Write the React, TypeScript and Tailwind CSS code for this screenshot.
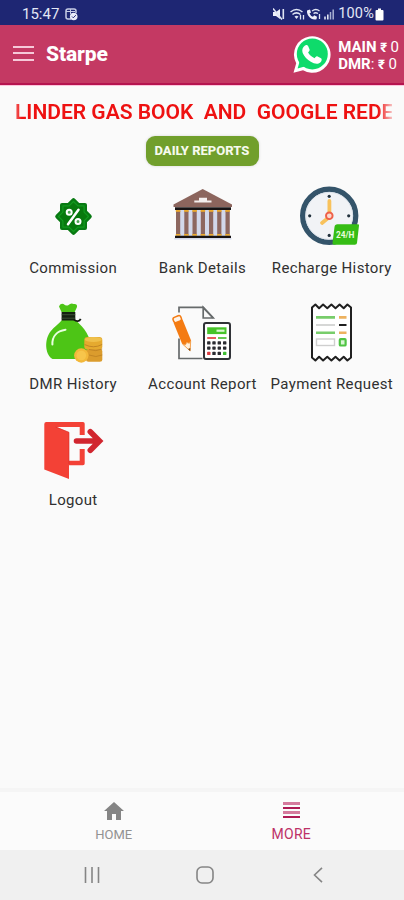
import { FunctionComponent, JSX, ReactNode } from "react";

const CommissionIcon: FunctionComponent = (): JSX.Element => (
  <svg viewBox="0 0 60 60" className="w-[60px] h-[60px]">
    <g fill="#087a12" stroke="#087a12" strokeWidth="4" strokeLinejoin="round">
      <rect x="19" y="19" width="23" height="23" />
      <rect x="19" y="19" width="23" height="23" transform="rotate(45 30.5 30.5)" />
    </g>
    <g fill="#07790d" stroke="#129a1e" strokeWidth="1.2" strokeLinejoin="round">
      <path d="M30.5 15.500l4.400 4.400h6.200v6.200l4.400 4.400-4.400 4.400v6.200h-6.200l-4.400 4.400-4.400-4.400h-6.200v-6.200l-4.400-4.400 4.400-4.400v-6.200h6.200z" />
    </g>
    <path d="M35.500 23.800L25 38.300" stroke="#fff" strokeWidth="2.500" strokeLinecap="round" />
    <g fill="#4ea653" stroke="#fff" strokeWidth="2">
      <circle cx="26.200" cy="26.200" r="2.500" />
      <circle cx="35" cy="35.600" r="2.500" />
    </g>
  </svg>
);

const BankIcon: FunctionComponent = (): JSX.Element => (
  <svg viewBox="0 0 60 60" className="w-[60px] h-[60px]">
    <path d="M30.7 3L60 18.5V21H1.5v-2.5z" fill="#8c655d" />
    <path d="M27 11.8h8v2.8h4.5v2H22.3v-2H27z" fill="#f4efee" />
    <path d="M3 21.2h56v2.9H3z" fill="#171314" />
    <path d="M4 24h54v26H4z" fill="#d2d8ea" />
    {[4, 12.3, 20.5, 28.8, 37, 45.2, 53.5].map((x) => (
      <g key={x}>
        <rect x={x} y="25" width="4.2" height="24" fill="#8d675f" />
        <rect x={x - 0.2} y="24" width="4.6" height="1.8" fill="#edaa2c" />
        <rect x={x - 0.2} y="48" width="4.6" height="1.8" fill="#edaa2c" />
      </g>
    ))}
    <path d="M3 49.7h56V52H3z" fill="#171314" />
    <path d="M2.3 52h57v1.6h-57z" fill="#d2d8ea" />
  </svg>
);

const ClockIcon: FunctionComponent = (): JSX.Element => (
  <svg viewBox="0 0 60 60" className="w-[60px] h-[60px] overflow-visible">
    <circle cx="28.2" cy="29.8" r="26.5" fill="#f1f3f6" stroke="#34546a" strokeWidth="5.400" />
    <circle cx="28.2" cy="29.8" r="23.500" fill="none" stroke="#dce3eb" strokeWidth="1" />
    <g fill="#22313d">
      <circle cx="28.2" cy="10.3" r="1.6" />
      <circle cx="8.7" cy="29.8" r="1.6" />
      <circle cx="47.7" cy="29.8" r="1.6" />
      <circle cx="28.2" cy="49.4" r="1.6" />
    </g>
    <path d="M28.4 15v13" stroke="#f8c25c" strokeWidth="3.8" strokeLinecap="round" />
    <path d="M26.5 32.5l-5.5 4.4" stroke="#f8c25c" strokeWidth="3.8" strokeLinecap="round" />
    <circle cx="28.3" cy="29.8" r="3.3" fill="#fbd9ce" stroke="#ee6048" strokeWidth="1.9" />
    <path
      d="M36.5 38.3H57q1.2 0 1 1.2l-2 17.5q-.2 1.8-2.2 1.8H33q-1.7 0-1.5-1.7l2-16q.3-2.8 3-2.8z"
      fill="#35bd14"
    />
    <text
      x="35"
      y="52"
      fontSize="9"
      textLength="18.5"
      className="fill-[#e8fbdc] font-bold"
      lengthAdjust="spacingAndGlyphs"
    >
      24/H
    </text>
  </svg>
);

const MoneyBagIcon: FunctionComponent = (): JSX.Element => (
  <svg viewBox="0 0 60 60" className="w-[60px] h-[60px] overflow-visible">
    <g fill="#4dc516">
      <path d="M18.5 10L16 4.5Q17 1 20.5 2q2.5 2.2 4.7 1.2Q28 .8 30.5 2q4-.6 3.5 3L31.7 10z" />
      <path d="M19 18h13.5c4 4 15 13 14.7 25.5L40 57H9.5C1.5 52 1.500 37 7.500 29.500c3.500-4.500 8.500-7.500 11.500-11.500z" />
    </g>
    <path d="M18.600 10h13.700v8.500H18.600z" fill="#142110" />
    <path d="M18.600 12.700h13.700M18.600 16.200h13.700" stroke="#4c6345" strokeWidth=".7" />
    <path d="M31 17.600c2.500 2.300 5.500 2 6.700-.8" fill="none" stroke="#171b14" strokeWidth="1.800" />
    <path
      d="M9.400 42.500C9 34.500 14 29 22.500 27.700"
      fill="none"
      stroke="#e8ffe0"
      strokeWidth="2"
      strokeLinecap="round"
    />
    <rect x="41.300" y="35" width="18" height="12.500" rx="3" fill="#e5aa2f" />
    <rect x="43" y="47" width="16.300" height="12.800" rx="2.500" fill="#db9c2d" />
    <ellipse cx="50.300" cy="37.500" rx="8.500" ry="2.500" fill="#efc04b" />
    <path d="M41.500 42.500q9 4.500 17.600 0M46 47.500q7 2.500 13.200-.5M46 53q7 3 13.200 0" fill="none" stroke="#c38624" strokeWidth="1" />
    <circle cx="38.300" cy="53.500" r="7.200" fill="#f3b83a" />
    <circle cx="38.300" cy="53.500" r="4.800" fill="#f7c54b" />
  </svg>
);

const keyRows = [40.8, 46, 51.3];
const keyCols = [36.8, 42, 47.3, 52.7];

const AccountIcon: FunctionComponent = (): JSX.Element => (
  <svg viewBox="0 0 60 60" className="w-[60px] h-[60px] overflow-visible">
    <g fill="none" stroke="#666a6b" strokeWidth="1.700">
      <path d="M7 10.500V5.400h24.200L41.200 16M7 36.500v20h23.500" />
      <path d="M31.200 5.400V16h10z" />
    </g>
    <g transform="translate(4.600 15.500) rotate(-22)">
      <path d="M-4.800 4h9.600v22.500l-4.800 9.500-4.800-9.500z" fill="#f47b12" />
      <path d="M-4.300 27L0 36l4.300-9-2.100 1.700L0 27l-2.100 1.700z" fill="#fff0dd" stroke="#f3a04b" strokeWidth=".8" />
      <path d="M-1.200 33.500L0 36.500l1.200-3z" fill="#754719" />
      <rect x="-4.100" y="-1" width="8.200" height="5.500" rx="2" fill="#fff3e6" stroke="#f47b12" strokeWidth="1.500" />
    </g>
    <rect x="32" y="21" width="26" height="36" rx="2" fill="#fff" stroke="#303237" strokeWidth="2" />
    <rect x="35.200" y="25.300" width="19.300" height="6.800" fill="#46c329" />
    <path d="M44.500 28.700h8" stroke="#d9f7d0" strokeWidth="2.200" />
    <path d="M35.200 36h8.800" stroke="#e65b5b" strokeWidth="2" />
    <path d="M46 36h8.500" stroke="#65c851" strokeWidth="2" />
    {keyRows.map((y, r) =>
      keyCols.map((x, c) => (
        <rect
          key={`${r}-${c}`}
          x={x - 1.700}
          y={y - 1.600}
          width="3.400"
          height="3.400"
          rx=".7"
          fill={r === 2 && c === 0 ? "#dc3e43" : r === 2 && c === 3 ? "#3ebd32" : "#2a2b31"}
        />
      )),
    )}
  </svg>
);

const ReceiptIcon: FunctionComponent = (): JSX.Element => (
  <svg viewBox="0 0 60 60" className="w-[60px] h-[60px] overflow-visible">
    <path
      d="M11 5.500l3.400-3 3.700 3.700 4-3.700 4.200 3.700 4.100-3.700 4.100 3.700 4.100-3.700 4.100 3.700 3.700-3.700L50 5.500v50l-3.600 3-3.700-3.700-4.100 3.700-4.100-3.700-4.100 3.700-4.100-3.700-4.200 3.700-4-3.700-3.700 3.700-3.400-3z"
      fill="#fff"
      stroke="#202020"
      strokeWidth="2"
      strokeLinejoin="round"
    />
    <path d="M15 15.400h19M15 30.700h19" stroke="#78cd6b" strokeWidth="2.600" />
    <path d="M15 23h19" stroke="#cfd0cf" strokeWidth="1.700" />
    <path d="M38 15.400h7.500M38 30.700h7.500" stroke="#edb260" strokeWidth="2.600" />
    <path d="M38 23h7.500" stroke="#202020" strokeWidth="2" />
    <rect x="15.500" y="37" width="18" height="6.500" fill="#fff" stroke="#cfcfcf" strokeWidth="1.400" />
    <rect x="38.800" y="37.100" width="5.800" height="6.400" rx=".8" fill="#d9f5d4" stroke="#4fc443" strokeWidth="2.200" />
  </svg>
);

const LogoutIcon: FunctionComponent = (): JSX.Element => (
  <svg viewBox="0 0 60 60" className="w-[60px] h-[60px] overflow-visible">
    <path
      d="M41.700 17h-5V9H13.500l-2-1L26 14.300v28.500h10.700V31h5v14.500q0 1.800-1.800 1.800H26V61L1.300 51.500V6q0-2 2-2H40q1.700 0 1.700 1.700z"
      fill="#f34136"
    />
    <path d="M12.500 9L26 14.300V46" fill="none" stroke="#d92e29" strokeWidth=".6" />
    <path
      d="M33.500 23H56M47.300 13.800L56.500 23l-9.200 9.200"
      fill="none"
      stroke="#d1262f"
      strokeWidth="5.600"
      strokeLinecap="round"
      strokeLinejoin="miter"
    />
  </svg>
);

const StatusIcons: FunctionComponent = (): JSX.Element => (
  <svg viewBox="0 0 62 14" className="w-[62px] h-[14px]" fill="none" stroke="#dfe4f4">
    <path d="M0 5h3l4-3v10L3 9H0z" fill="#eef0fa" stroke="none" />
    <path d="M0 1.500l9 11" strokeWidth="1.500" />
    <path d="M10.300 2v10" strokeWidth="1.600" />
    <path d="M17.500 5q6-5 12 0M19.500 7.500q4-3.300 8 0" strokeWidth="1.500" />
    <path d="M21.500 9.500q2-1.700 4 0l-2 2.500z" fill="#dfe4f4" stroke="none" />
    <path d="M27.500 8v4.500M30.500 8v4.500" strokeWidth="1.300" />
    <path
      d="M34 3.500l3-1 1 3-1.500 1q1 2.500 3.500 3.200l1.200-1.500 2.800 1.500-.5 2.500C38 13.500 33.500 8.500 34 3.500z"
      fill="#eef0fa"
      stroke="none"
    />
    <path d="M39 4q4-3 7.500 0M40.500 6.500q2-1.500 4.500 0M46.500 7v5" strokeWidth="1.300" />
    <path d="M52 9.500v3M54.800 7.500v5" strokeWidth="1.600" />
    <path d="M57.500 5v7.500M60.200 2.500v10" strokeWidth="1.500" stroke="#a9b1d4" />
  </svg>
);

const WhatsappIcon: FunctionComponent = (): JSX.Element => (
  <svg viewBox="0 0 38 38" className="w-[38px] h-[38px]">
    <path
      d="M.500 37.800l2.700-9.500A18.300 18.300 0 1 1 10 35.300z"
      fill="#fff"
    />
    <circle cx="19.300" cy="18.900" r="15.500" fill="#0edb6b" />
    <path d="M4.600 33.600l2-7 5 5z" fill="#0edb6b" />
    <path
      d="M12 10.500c1-.9 2.600-.6 3.100.6l1.500 3.500c.4 1-.8 2-1.500 3 1.300 2.500 3.500 4.500 6.500 5.600.8-1 1.600-2.300 2.600-1.900l3.800 1.900c1.300.7.700 3-.7 4.200-2.700 2.200-6.200 1.200-9.500-.7-3.500-2-6.700-5.500-8.100-8.800-1-2.700-.2-5.700 2.300-7.400z"
      fill="#fff"
    />
  </svg>
);

const Tile: FunctionComponent<{
  label: string;
  children: ReactNode;
}> = ({ label, children }): JSX.Element => (
  <button className="flex flex-col items-center h-[116px]">
    {children}
    <span className="mt-3 pl-px text-[15px] leading-5 whitespace-nowrap tracking-[0.36px] text-[#303030]">
      {label}
    </span>
  </button>
);

const App: FunctionComponent = (): JSX.Element => (
  <div className="flex flex-col w-[404px] h-[900px] overflow-hidden bg-[#fafafa] font-[Roboto,sans-serif]">
    <div className="flex items-center justify-between h-[25px] shrink-0 pl-[22px] pr-5 bg-[#1e2673] text-[#e3e7f5]">
      <div className="flex items-center gap-[6px] pt-[3px]">
        <span className="text-[15px] leading-none">15:47</span>
        <svg viewBox="0 0 13 13" className="w-[13px] h-[13px]" fill="none" stroke="#c7cde6">
          <path d="M6 11H3Q1 11 1 9V3q0-2 2-2h6q2 0 2 2v2" strokeWidth="1.500" />
          <path d="M1 3.500h9M5.500 1v5" strokeWidth="1" />
          <circle cx="8.700" cy="8.500" r="3.800" fill="#e9ecf8" stroke="none" />
          <path d="M7 8.500l1.300 1.300 2.500-2.600" stroke="#1e2673" strokeWidth="1" />
        </svg>
      </div>
      <div className="flex items-center pt-[3px]">
        <StatusIcons />
        <span className="ml-[3px] text-[14.500px] leading-none tracking-[0.2px]">100%</span>
        <svg viewBox="0 0 9 13" className="w-[9px] h-[13px] ml-px" fill="#fff">
          <path d="M3 .5h3V2h1.500q1 0 1 1v8.500q0 1-1 1h-6q-1 0-1-1V3q0-1 1-1H3z" />
        </svg>
      </div>
    </div>

    <header className="flex items-center h-[60px] shrink-0 pl-[13px] pr-[5px] bg-[#c43963] border-b-2 border-[#b5144f] text-white">
      <div className="flex flex-col gap-[4.500px] w-[21px] mb-0.5">
        <div className="h-[2px] bg-[#f6c9d9]" />
        <div className="h-[2px] bg-[#f6c9d9]" />
        <div className="h-[2px] bg-[#f6c9d9]" />
      </div>
      <h1 className="ml-3 text-[21px] leading-6 font-extrabold tracking-[-0.1px]">Starpe</h1>
      <div className="flex items-center ml-auto">
        <WhatsappIcon />
        <div className="flex flex-col ml-[7px] pt-1 text-[15px] leading-[17px] whitespace-nowrap tracking-[-0.05px]">
          <span>
            <b>MAIN</b> <b className="text-[13px]">₹</b> 0
          </span>
          <span>
            <b>DMR</b>: <b className="text-[13px]">₹</b> 0
          </span>
        </div>
      </div>
    </header>
    <div className="h-px shrink-0 bg-[#fbc5dc]" />

    <main className="flex flex-col flex-1 items-center">
      <div className="w-[380px] h-7 mt-3 pl-[3px] whitespace-pre text-[21px] leading-7 font-semibold text-[#ee1111] mask-[linear-gradient(to_right,rgba(0,0,0,0.5),black_10px,black_366px,rgba(0,0,0,0.25)_380px)]">
        LINDER GAS BOOK  AND  GOOGLE REDE
      </div>
      <button className="w-[113px] h-[30px] mt-[10px] rounded-[9px] bg-[#719f2c] text-[13px] font-extrabold text-[#f6faee] shadow-[0_0_3px_rgba(0,0,0,0.15)]">
        DAILY REPORTS
      </button>
      <div className="grid grid-cols-3 w-[388px] mt-5">
        <Tile label="Commission">
          <CommissionIcon />
        </Tile>
        <Tile label="Bank Details">
          <BankIcon />
        </Tile>
        <Tile label="Recharge History">
          <ClockIcon />
        </Tile>
        <Tile label="DMR History">
          <MoneyBagIcon />
        </Tile>
        <Tile label="Account Report">
          <AccountIcon />
        </Tile>
        <Tile label="Payment Request">
          <ReceiptIcon />
        </Tile>
        <Tile label="Logout">
          <LogoutIcon />
        </Tile>
      </div>
    </main>

    <nav className="flex h-[62px] shrink-0 pl-[25px] pr-[24px] border-t-4 border-[#f5f5f5] bg-[#fbfbfb]">
      <div className="flex flex-col flex-1 items-center pt-[10px]">
        <svg viewBox="0 0 20 18" className="w-5 h-[18px]" fill="#858585">
          <path d="M10 0l10 9h-3v9h-5v-6H8v6H3V9H0z" />
        </svg>
        <span className="mt-[7px] text-[13px] leading-4 text-[#929292]">HOME</span>
      </div>
      <div className="flex flex-col flex-1 items-center pt-[10px]">
        <div className="flex flex-col gap-[2px] w-[17px] h-[17px]">
          <div className="h-[3px] bg-[#d57a9d]" />
          <div className="h-[2px] bg-[#ae1a54]" />
          <div className="h-[3px] bg-[#d57a9d]" />
          <div className="h-[2px] bg-[#ae1a54]" />
        </div>
        <span className="mt-[7px] text-[14px] leading-4 tracking-[0.3px] text-[#bd3167]">MORE</span>
      </div>
    </nav>

    <div className="flex items-center h-[50px] shrink-0 pl-[84px] pr-[81px] bg-[#f0f0f0]">
      <svg viewBox="0 0 16 16" className="w-4 h-4" fill="none" stroke="#858585" strokeWidth="1.600">
        <path d="M1.500 0v16M8 0v16M14.500 0v16" />
      </svg>
      <svg viewBox="0 0 18 18" className="w-[18px] h-[18px] ml-[96px]" fill="none" stroke="#858585" strokeWidth="1.600">
        <rect x="1" y="1" width="16" height="16" rx="5" />
      </svg>
      <svg viewBox="0 0 10 16" className="w-[10px] h-4 ml-auto" fill="none" stroke="#858585" strokeWidth="1.600">
        <path d="M9 .8L1.500 8 9 15.200" />
      </svg>
    </div>
  </div>
);

export default App;
